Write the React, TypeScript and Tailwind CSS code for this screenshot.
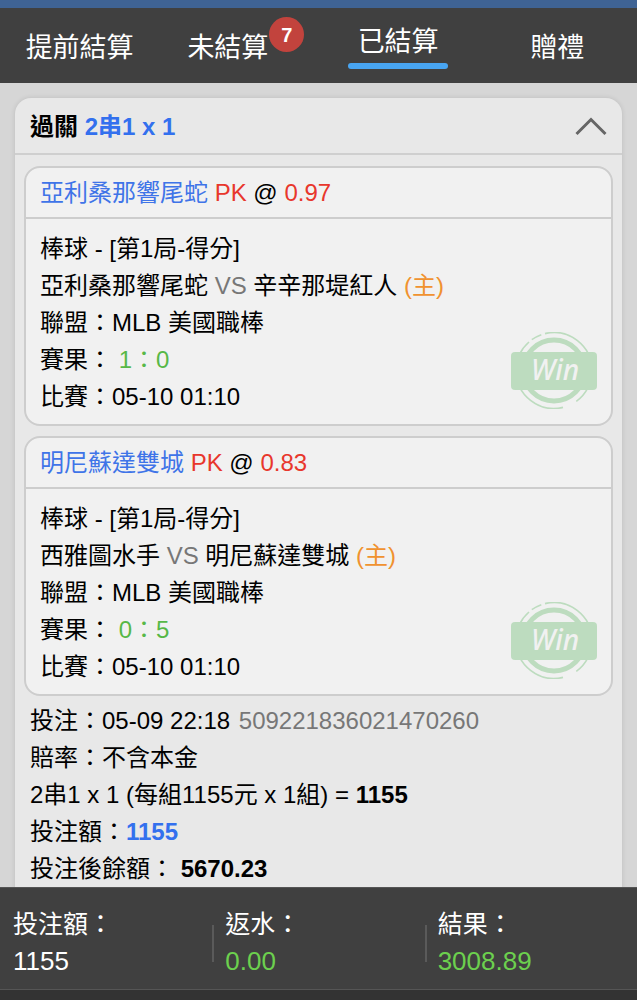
import { useState } from "react";

interface Leg {
    pick: string;
    odds: string;
    market: string;
    away: string;
    home: string;
    league: string;
    score: string;
    time: string;
}

const tabs = [
    { id: "early", label: "提前結算" },
    { id: "open", label: "未結算", badge: 7 },
    { id: "settled", label: "已結算" },
    { id: "gift", label: "贈禮" },
];

const legs: Leg[] = [
    {
        pick: "亞利桑那響尾蛇",
        odds: "0.97",
        market: "棒球 - [第1局-得分]",
        away: "亞利桑那響尾蛇",
        home: "辛辛那堤紅人",
        league: "MLB 美國職棒",
        score: "1：0",
        time: "05-10 01:10",
    },
    {
        pick: "明尼蘇達雙城",
        odds: "0.83",
        market: "棒球 - [第1局-得分]",
        away: "西雅圖水手",
        home: "明尼蘇達雙城",
        league: "MLB 美國職棒",
        score: "0：5",
        time: "05-10 01:10",
    },
];

const totals = [
    { label: "投注額：", value: "1155", color: "text-white" },
    { label: "返水：", value: "0.00", color: "text-[#6cd04e]" },
    { label: "結果：", value: "3008.89", color: "text-[#6cd04e]" },
];

function WinStamp() {
    return (
        <svg
            viewBox="0 0 86 77"
            className="absolute right-[14px] bottom-[15px] h-[77px] w-[86px]"
            role="img"
            aria-label="Win"
        >
            <g fill="none" stroke="#bddcbf">
                <circle cx="43" cy="38.5" r="30.5" strokeWidth="5" />
                <g strokeWidth="1.6">
                    <path d="M34 1.6 A38 38 0 0 1 81 38.5" />
                    <path d="M20.8 7.7 A38 38 0 0 1 30.3 2.7" />
                    <path d="M5 38.5 A38 38 0 0 1 18 10" />
                    <path d="M5 38.5 A38 38 0 0 0 52 75.4" />
                    <path d="M65.3 69.3 A38 38 0 0 0 81 38.5" />
                </g>
            </g>
            <rect x="0" y="20" width="86" height="38" rx="4" fill="#bddcbf" />
            <text
                x="44"
                y="48"
                textAnchor="middle"
                fill="#f1f1f1"
                className="font-['Noto_Sans','Open_Sans',sans-serif] text-[28px] font-medium italic"
            >
                Win
            </text>
        </svg>
    );
}

function LegCard({ leg }: { leg: Leg }) {
    return (
        <section className="relative rounded-2xl border-2 border-[#cdcdcd] bg-[#f1f1f1]">
            <h3 className="border-b-2 border-[#cdcdcd] px-[14px] pt-[6px] pb-[6px]">
                <span className="text-[#3f74e8]">{leg.pick}</span> <span className="text-[#e8372c]">PK</span> @{" "}
                <span className="text-[#e8372c]">{leg.odds}</span>
            </h3>
            <div className="px-[14px] pt-[11px] pb-[9px]">
                <p>{leg.market}</p>
                <p>
                    {leg.away} <span className="text-[#777]">VS</span> {leg.home}{" "}
                    <span className="text-[#f0922f]">(主)</span>
                </p>
                <p>聯盟：{leg.league}</p>
                <p>
                    賽果： <span className="text-[#57b847]">{leg.score}</span>
                </p>
                <p>比賽：{leg.time}</p>
            </div>
            <WinStamp />
        </section>
    );
}

export default function App() {
    const [activeTab, setActiveTab] = useState("settled");
    const [expanded, setExpanded] = useState(true);

    return (
        <div className="flex h-screen flex-col bg-[#d6d6d6] font-['Liberation_Sans','Noto_Sans_CJK_TC',sans-serif] text-black">
            {/* Tabs */}
            <nav className="grid h-[83px] shrink-0 grid-cols-4 border-t-8 border-[#3f6394] bg-[#404040] text-[27px] leading-9 text-white">
                {tabs.map((tab) => (
                    <button
                        key={tab.id}
                        onClick={() => setActiveTab(tab.id)}
                        className={`flex flex-col items-center justify-center gap-[3px] pt-[5px] ${tab.badge ? "pr-[22px]" : ""}`}
                    >
                        <span className="relative whitespace-nowrap">
                            {tab.label}
                            {tab.badge && (
                                <span className="absolute -top-[13px] left-full ml-px flex size-[35px] items-center justify-center rounded-full bg-[#c2433d] text-xl font-bold">
                                    {tab.badge}
                                </span>
                            )}
                        </span>
                        {activeTab === tab.id && <span className="mb-1 h-[6px] w-[100px] rounded-full bg-[#48a5f2]" />}
                    </button>
                ))}
            </nav>

            {/* Bet slip */}
            <main className="min-h-0 flex-1 overflow-y-auto px-[15px] pt-[15px] [scrollbar-width:none]">
                <article className="rounded-2xl bg-[#e8e8e8] pb-6 text-2xl leading-[37px] shadow-[0_0_5px_rgba(0,0,0,0.12)]">
                    <button
                        onClick={() => setExpanded(!expanded)}
                        aria-expanded={expanded}
                        className="flex w-full items-center justify-between border-b-2 border-[#cfcfcf] px-[15px] pt-[10px] pb-2 font-bold"
                    >
                        <span>
                            過關 <span className="text-[#3370ee]">2串1 x 1</span>
                        </span>
                        <svg
                            viewBox="0 0 32 20"
                            className={`h-5 w-8 ${expanded ? "" : "rotate-180"}`}
                            fill="none"
                            stroke="#666"
                            strokeWidth="3"
                            aria-hidden="true"
                        >
                            <path d="M1.5 17 L16 2.5 L30.5 17" />
                        </svg>
                    </button>

                    {expanded && (
                        <>
                            <div className="flex flex-col gap-[10px] px-[9px] pt-[11px]">
                                {legs.map((leg) => (
                                    <LegCard key={leg.pick} leg={leg} />
                                ))}
                            </div>
                            <div className="px-[15px] pt-[6px]">
                                <p>
                                    投注：05-09 22:18 <span className="ml-[2px] text-[#777]">509221836021470260</span>
                                </p>
                                <p>賠率：不含本金</p>
                                <p>
                                    2串1 x 1 (每組1155元 x 1組) = <b className="font-bold">1155</b>
                                </p>
                                <p>
                                    投注額：<b className="font-bold text-[#3370ee]">1155</b>
                                </p>
                                <p>
                                    投注後餘額： <b className="font-bold">5670.23</b>
                                </p>
                            </div>
                        </>
                    )}
                </article>
            </main>

            {/* Totals */}
            <footer className="shrink-0 border-t border-[#555] bg-[#333] text-white">
                <dl className="grid grid-cols-3 border-b border-[#555] bg-[#404040] pt-[18px] pb-[9px] leading-[37px]">
                    {totals.map((item, i) => (
                        <div key={item.label} className="flex items-center">
                            {i > 0 && <span className="h-[37px] w-[2px] bg-[#5a5a5a]" />}
                            <div className={i > 0 ? "pl-[11px]" : "pl-[13px]"}>
                                <dt className="text-[25px]">{item.label}</dt>
                                <dd className={`text-[26px] ${item.color}`}>{item.value}</dd>
                            </div>
                        </div>
                    ))}
                </dl>
                <div className="h-[10px]" />
            </footer>
        </div>
    );
}
